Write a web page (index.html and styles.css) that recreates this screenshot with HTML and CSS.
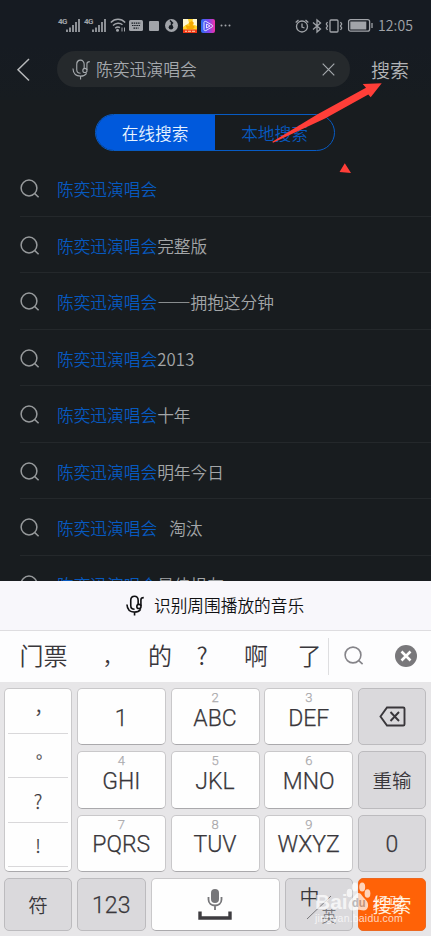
FILE: index.html
```
<!DOCTYPE html>
<html lang="zh-CN">
<head>
<meta charset="utf-8">
<title>搜索</title>
<link rel="stylesheet" href="styles.css">
</head>
<body>
<svg class="defs" width="0" height="0">
  <defs>
    <symbol id="lens" viewBox="0 0 20 20"><circle cx="9" cy="9" r="7.9"/><path d="M14.8 14.6 18.6 18.2"/></symbol>
    <symbol id="mic" viewBox="0 0 20 22"><path d="M12.8 10V5.5C12.8 2.8 11.2 1.2 9 1.2S5 2.8 5 5.5V11c0 2.5 1.8 4 4 4M1 10c.3 4.800 3.300 8 8 8 2.800 0 5-1 6.400-3M9 18v3.500M15.700 11.500V5c0-1.500 1-2.300 3-2.300"/><circle cx="13.600" cy="12" r="2.200"/></symbol>
    <symbol id="signal" viewBox="0 0 22 15"><path d="M9 14v-2.500M12 14V9.500M15 14V7M18 14V4M21 14V1"/></symbol>
  </defs>
</svg>
<div class="screen">
  <header class="status">
    <div class="status-left">
      <div class="cell"><span>4G</span><svg width="22" height="15"><use href="#signal"/></svg></div>
      <div class="cell second"><span>4G</span><svg width="22" height="15"><use href="#signal"/></svg></div>
      <svg class="wifi" width="16" height="15" viewBox="0 0 16 15"><path d="M.8 4.500C5 .3 11 .3 15.200 4.500M3 7.500c3-3 7-3 9.500-.8M5.200 10.200C6.800 8.700 8.500 8.700 10 9.600"/><circle class="dot" cx="7.500" cy="12.300" r="1.500"/><path class="thin" d="M12 9.500v4M14.500 9.500v4"/></svg>
      <svg class="kb" width="14" height="11" viewBox="0 0 14 11"><rect width="14" height="11" rx="1.500"/><path d="M2.500 3.200h9M3 5.500h8M4.500 8.200h5"/></svg>
      <i class="square"></i>
      <svg class="disc" width="13" height="13" viewBox="0 0 13 13"><circle cx="6.500" cy="6.500" r="6.500"/><path d="M5 1.500 8 4.500M6.500 3v5"/><circle class="hole" cx="6" cy="8.200" r="2.300"/></svg>
      <svg class="app1" width="14" height="14" viewBox="0 0 14 14"><path fill="#ffd32a" d="M0 0h14v14H0z"/><path fill="#fff8d0" d="M0 0h5l1 4-6 4zM10 0h4v7L9 5z"/><path fill="#f4a900" d="M6 3.500 9 2l2 2-1.500 2L12 8l-2 2H4L2.500 6l4 1z"/><path fill="#f13918" d="M0 10.500h14V14H0z"/><path fill="#ffd9b0" d="M2 11.800h2v1H2zM5 11.800h3v1H5zM9 11.800h3v1H9z"/></svg>
      <svg class="app2" width="14" height="14" viewBox="0 0 14 14"><defs><linearGradient id="ag"><stop stop-color="#276df5"/><stop offset=".55" stop-color="#8046ef"/><stop offset="1" stop-color="#f431a5"/></linearGradient></defs><rect width="14" height="14" rx="2" fill="url(#ag)" stroke="none"/><path d="M3 3.500v7c0 1 1 1.500 2 1l6-3.500c1-.5 1-1.500 0-2L5 2.500c-1-.5-2 0-2 1zM5.500 5v4L9 7z" fill="none" stroke="#dce3ff"/></svg>
      <svg class="dots" width="11" height="3" viewBox="0 0 11 3"><circle cx="1.500" cy="1.500" r="1"/><circle cx="5.500" cy="1.500" r="1"/><circle cx="9.500" cy="1.500" r="1"/></svg>
    </div>
    <div class="status-right">
      <svg width="14" height="14" viewBox="0 0 14 14"><circle cx="7" cy="7.500" r="5.500"/><path d="M.7 3.500 3.500 1M10.500 1l2.800 2.500M7 4.500v3.500l2.500 1"/></svg>
      <svg width="10" height="14" viewBox="0 0 10 14"><path d="m1 3.500 7.500 6.500L5 13V1l3.500 3L1 10.500"/></svg>
      <svg width="18" height="14" viewBox="0 0 18 14"><rect x="5" y="1" width="8" height="12" rx="1"/><path d="m2.500 3 -1.200 2 1.200 2-1.200 2 1.200 2M15.500 3l1.200 2-1.200 2 1.200 2-1.200 2"/></svg>
      <svg class="battery" width="25" height="13" viewBox="0 0 25 13"><rect x=".6" y=".6" width="21" height="11.600" rx="2"/><path class="solid" d="M2.300 2.500h16v8h-16z"/><path d="M24 4v5"/></svg>
      <time>12:05</time>
    </div>
  </header>
  <div class="search-row">
    <svg class="back" width="14" height="25" viewBox="0 0 14 25"><path d="M12 2 1 12.700l11 10.800"/></svg>
    <div class="field"><svg class="mic" width="19" height="21"><use href="#mic"/></svg><span>陈奕迅演唱会</span><svg class="clear" width="13" height="13" viewBox="0 0 13 13"><path d="m.7.700 11.600 11.600M12.300.7.700 12.300"/></svg></div>
    <span class="go">搜索</span>
  </div>
  <div class="tabs"><span class="tab active">在线搜索</span><span class="tab">本地搜索</span></div>
  <main class="list">
    <div class="row"><svg width="20" height="20"><use href="#lens"/></svg><p><b>陈奕迅演唱会</b></p></div>
    <div class="row"><svg width="20" height="20"><use href="#lens"/></svg><p><b>陈奕迅演唱会</b>完整版</p></div>
    <div class="row"><svg width="20" height="20"><use href="#lens"/></svg><p><b>陈奕迅演唱会</b>——拥抱这分钟</p></div>
    <div class="row"><svg width="20" height="20"><use href="#lens"/></svg><p><b>陈奕迅演唱会</b><span class="year">2013</span></p></div>
    <div class="row"><svg width="20" height="20"><use href="#lens"/></svg><p><b>陈奕迅演唱会</b>十年</p></div>
    <div class="row"><svg width="20" height="20"><use href="#lens"/></svg><p><b>陈奕迅演唱会</b>明年今日</p></div>
    <div class="row"><svg width="20" height="20"><use href="#lens"/></svg><p><b>陈奕迅演唱会</b><span class="gap">淘汰</span></p></div>
    <div class="row"><svg width="20" height="20"><use href="#lens"/></svg><p><b>陈奕迅演唱会</b>最佳损友</p></div>
  </main>
  <div class="recognize"><svg width="19" height="21"><use href="#mic"/></svg><span>识别周围播放的音乐</span></div>
  <div class="candidates">
    <span>门票</span><span class="cm">，</span><span>的</span><span>?</span><span>啊</span><span>了</span>
    <div class="tools">
      <svg class="find" width="20" height="20"><use href="#lens"/></svg>
      <svg class="close" width="22" height="22" viewBox="0 0 22 22"><circle cx="11" cy="11" r="11"/><path d="m6.500 6.500 9 9M15.500 6.500l-9 9"/></svg>
    </div>
  </div>
  <div class="keyboard">
    <div class="keys">
      <div class="key punct"><span class="comma">，</span><span class="stop">。</span><span>?</span><span>!</span></div>
      <div class="key">1</div>
      <div class="key"><small>2</small>ABC</div>
      <div class="key"><small>3</small>DEF</div>
      <div class="key gray"><svg class="erase" width="27" height="21" viewBox="0 0 27 21"><path d="M8 1.500h16.200q1.300 0 1.300 1.300v15.400q0 1.300-1.300 1.300H8L1.500 10.500zM11.500 6l8.500 9M20 6l-8.500 9"/></svg></div>
      <div class="key"><small>4</small>GHI</div>
      <div class="key"><small>5</small>JKL</div>
      <div class="key"><small>6</small>MNO</div>
      <div class="key gray word">重输</div>
      <div class="key"><small>7</small>PQRS</div>
      <div class="key"><small>8</small>TUV</div>
      <div class="key"><small>9</small>WXYZ</div>
      <div class="key gray">0</div>
    </div>
    <div class="keys bottom">
      <div class="key gray word">符</div>
      <div class="key gray">123</div>
      <div class="key"><svg width="34" height="33" viewBox="0 0 34 33"><rect x="13" y="0" width="8" height="14" rx="4" fill="#77777a" stroke="none"/><path d="M10.500 8v2.500c0 8 13 8 13 0V8M17 17v4" fill="none" stroke="#77777a" stroke-width="1.800"/><path d="M2 22.500V29h30v-6.500" fill="none" stroke="#3e3c40" stroke-width="3.400"/></svg></div>
      <div class="key gray lang"><span>中</span><svg width="26" height="26" viewBox="0 0 26 26"><path d="M1 24 25 1"/></svg><span class="en">英</span></div>
      <div class="key orange word">搜索</div>
    </div>
  </div>
  <svg class="arrow" width="116" height="92" viewBox="0 0 116 92"><path d="M.3 59.700 46 32 94 5.800 90.700 2 109.700 1.300 98.700 15.300 96.300 12.500 53 36.500 1 60.700zM72.800 81.300 79 91 67.500 90z"/></svg>
  <div class="watermark">
    <div class="brand"><span>Bai</span><svg width="25" height="29" viewBox="0 0 27 29" preserveAspectRatio="none"><ellipse cx="3.800" cy="11" rx="3.100" ry="4.300"/><ellipse cx="9.500" cy="5" rx="3.200" ry="4.600"/><ellipse cx="17.500" cy="5" rx="3.200" ry="4.600"/><ellipse cx="23.200" cy="11.500" rx="3.100" ry="4.300"/><path d="M13.500 11c3 0 4 3.500 7.500 6.500 5 4.500 3 11-2 11-3 0-4-.7-6-.7s-3 .7-6 .7c-5 0-6-7-1.500-11S10.500 11 13.500 11z"/><text x="6.500" y="25">du</text></svg><span class="exp">经验</span></div>
    <div class="site">jingyan.baidu.com</div>
  </div>
</div>
</body>
</html>
```
FILE: styles.css
```
* { box-sizing: border-box; }
body { margin: 0; background: #181c1f; font-family: "Noto Sans CJK SC", sans-serif; font-weight: 350; }
p { margin: 0; }
b { font-weight: inherit; color: #0759bf; }
svg { display: block; flex: none; fill: none; stroke: currentColor; overflow: visible; }
.defs { position: absolute; }
.screen { position: relative; width: 431px; height: 936px; overflow: hidden; display: flex; flex-direction: column; color: #a5a8ac; }
.status { height: 45px; padding: 18px 18px 0 58px; background: #161b22; display: flex; justify-content: space-between; color: #a1a4a9; }
.status-left, .status-right { display: flex; align-items: center; height: 15px; }
.status-left svg { stroke-width: 1.500; }
.cell { display: flex; width: 22px; height: 15px; }
.cell span { width: 0; font: bold 8px/8px Roboto, sans-serif; letter-spacing: -.6px; }
.cell svg { stroke-width: 1.700; }
.second { margin-left: 4px; }
.wifi { margin-left: 4px; }
.wifi .dot { fill: currentColor; stroke: none; }
.wifi .thin { stroke-width: 1; }
.kb { margin-left: 3px; }
.kb rect, .disc circle, .dots circle { fill: currentColor; stroke: none; }
.kb path { stroke: #161b22; stroke-width: 1.200; stroke-dasharray: 1.500 .7; }
.square { width: 10px; height: 10px; margin-left: 6px; border-radius: 1px; background: #a1a4a9; }
.disc { margin-left: 6px; }
.disc path { stroke: #161b22; }
.status-left .disc .hole { fill: #161b22; }
.app1 { margin-left: 5px; }
.app2 { margin-left: 4px; }
.app1 path { stroke: none; }
.app2 path { stroke-width: 1; }
.dots { margin-left: 5px; }
.status-right svg { stroke-width: 1.300; }
.status-right { gap: 3px; }
.status-right .battery { margin-left: 2px; }
.status-right .solid { fill: currentColor; stroke: none; }
time { margin-left: 2px; font: 350 14px/15px "Noto Sans CJK SC", sans-serif; letter-spacing: .1px; }
.search-row { height: 55px; padding: 6px 22px 0 17px; background: linear-gradient(#161b22, #171c20); display: flex; align-items: flex-start; }
.back { margin-top: 6px; color: #b6b8ba; stroke-width: 1.500; }
.field { width: 293px; height: 36px; margin-left: 26px; padding: 0 15px; border-radius: 18px; background: #25292c; display: flex; align-items: center; font-size: 16.800px; color: #a4a8ac; }
.mic { margin-right: 5px; stroke-width: 1.200; }
.clear { margin-left: auto; stroke-width: 1.200; }
.go { margin-left: auto; font-size: 19px; line-height: 37px; color: #b2b4b7; }
.tabs { width: 240px; height: 37px; margin: 14px auto 0 95px; border: 1px solid #075bc4; border-radius: 19px; overflow: hidden; display: flex; flex: none; font-size: 16.700px; line-height: 36px; text-align: center; }
.tab { flex: 1; color: #0759bf; }
.tab.active { background: #0059dc; color: #e7f3ff; text-indent: -1px; }
.list { height: 430px; padding-top: 9px; overflow: hidden; flex: none; }
.row { height: 56.500px; padding: 3px 0 0 20px; display: flex; align-items: center; font-size: 16.700px; color: #a3a6a8; border-bottom: 1px solid transparent; border-image: linear-gradient(90deg, transparent 21px, #24282b 21px) 1; }
.row svg { margin-right: 17px; stroke-width: 1.500; color: #979a9c; }
.gap { margin-left: 12px; }
.year { letter-spacing: .2px; }
.recognize { height: 50px; flex: none; background: #f8f7fb; border-bottom: 1px solid #dedde0; display: flex; align-items: center; padding: 0 0 1px 126px; gap: 9px; font-size: 16.700px; color: #101012; }
.recognize svg { stroke-width: 1.700; }
.candidates { height: 51px; flex: none; background: #fdfdfe; display: grid; grid-template-columns: 87px 50px 46px 38px 70px 37px 103px; align-items: center; text-align: center; color: #39373b; font-size: 24px; line-height: 48px; }
.candidates > span { white-space: nowrap; padding-bottom: 3px; }
.candidates .cm { text-indent: 2px; font-size: 21px; }
.tools { height: 37px; border-left: 1px solid #dedee0; display: flex; align-items: center; justify-content: space-between; padding: 0 14px 2px 15px; }
.find { color: #858489; stroke-width: 1.600; }
.close { color: #79787b; }
.close circle { fill: currentColor; stroke: none; }
.close path { stroke: white; stroke-width: 2.600; }
.keyboard { height: 254px; flex: none; padding: 6px 5px 5px 4px; background: #e7e6e8; color: #39373b; font-family: Roboto, "Noto Sans CJK SC", sans-serif; font-weight: 300; }
.keys { display: grid; grid-template-columns: 68px 89px 89px 89px 68px; grid-template-rows: repeat(3, 57.300px); gap: 6px 4.750px; }
.bottom { grid-template-columns: 68px 68.500px 129px 68.500px 68px; grid-template-rows: 53px; margin-top: 6px; gap: 5px; }
.key { position: relative; display: flex; align-items: center; justify-content: center; border: 1px solid #c9c8ca; border-bottom-color: #aaa9ac; border-radius: 5px; background: #fefefe; font-size: 23px; padding-top: 3px; -webkit-text-stroke: .25px; }
.key small { position: absolute; top: 2px; left: 0; right: 0; text-align: center; font-size: 13px; line-height: 13px; color: #aaa9ac; }
.gray { background: #dad9dc; border-color: #bcbbbe; }
.erase { margin-top: -3px; stroke-width: 1.900; }
.word { font-size: 19.500px; font-family: "Noto Sans CJK SC", sans-serif; font-weight: 350; padding: 0; -webkit-text-stroke: 0; }
.punct { grid-row: span 3; display: grid; grid-template-rows: 45px 44px 44.500px 44.500px; align-content: start; align-items: stretch; padding: 0 3px; font-size: 19px; line-height: 24px; font-family: "Noto Sans CJK SC", sans-serif; }
.punct span { border-bottom: 1px solid #d9d8da; display: flex; align-items: center; justify-content: center; width: 60px; padding-top: 2px; }
.punct .comma { padding: 0 0 11px 12px; }
.punct .stop { padding: 0 0 10px 12px; font-size: 16px; }
.lang { padding: 0; font-family: "Noto Sans CJK SC", sans-serif; font-weight: 350; -webkit-text-stroke: 0; }
.lang > * { position: absolute; }
.lang span { left: 14px; top: 3px; font-size: 20px; line-height: 30px; }
.lang svg { left: 20px; top: 16px; color: #77767a; }
.lang .en { left: 36px; top: 25px; font-size: 15px; line-height: 24px; color: #77767a; }
.orange { background: #ff6207; border-color: #ec6821; color: #fff1dc; }
.arrow { position: absolute; left: 272px; top: 82px; fill: #ff3e38; stroke: none; }
.watermark { position: absolute; left: 315px; top: 882px; color: #ffffff; opacity: .72; font-family: "Liberation Sans", sans-serif; font-weight: 400; }
.brand { display: flex; height: 31px; align-items: flex-end; font-size: 21px; line-height: 22px; }
.brand span { font-weight: bold; }
.brand svg { fill: white; stroke: none; margin: 0 1px 2px -2px; }
.brand text { fill: #a9a8aa; font-size: 12px; font-weight: bold; }
.brand .exp { margin-left: 1px; font: 350 16.500px/20px "Noto Sans CJK SC", sans-serif; }
.site { margin-top: -1px; font-size: 10.500px; line-height: 12px; letter-spacing: .2px; }
```
